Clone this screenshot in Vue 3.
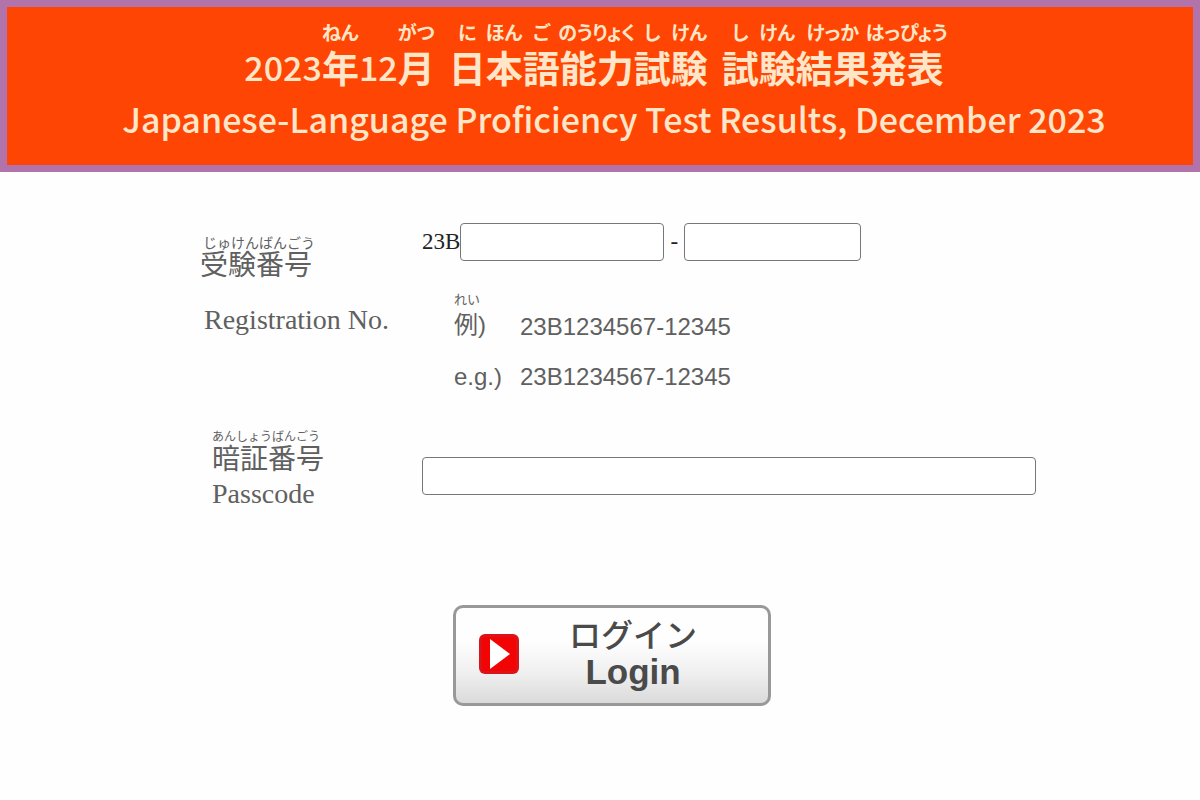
<script setup>
import { ref } from 'vue'

const registration = ref('')
const suffix = ref('')
const passcode = ref('')

const dateParts = [
  { base: '2023', digits: true },
  { base: '年', kana: 'ねん' },
  { base: '12', digits: true },
  { base: '月', kana: 'がつ' },
]
const testParts = [
  { base: '日', kana: 'に' },
  { base: '本', kana: 'ほん' },
  { base: '語', kana: 'ご' },
  { base: '能力', kana: 'のうりょく' },
  { base: '試', kana: 'し' },
  { base: '験', kana: 'けん' },
]
const resultParts = [
  { base: '試', kana: 'し' },
  { base: '験', kana: 'けん' },
  { base: '結果', kana: 'けっか' },
  { base: '発表', kana: 'はっぴょう' },
]
const titleGroups = [dateParts, testParts, resultParts]
</script>

<template>
  <div class="page">
    <header class="banner">
      <h1 class="title">
        <span v-for="(group, g) in titleGroups" :key="g" class="group">
          <span v-for="(part, p) in group" :key="p" class="part">
            <span class="kana">{{ part.kana }}</span>
            <span :class="{ digits: part.digits }">{{ part.base }}</span>
          </span>
        </span>
      </h1>
      <p class="subtitle">Japanese-Language Proficiency Test Results, December 2023</p>
    </header>

    <form class="form" @submit.prevent>
      <div class="row">
        <label class="label" for="registration">
          <span class="reading indent">じゅけんばんごう</span>
          <span class="kanji">受験番号</span>
          <span class="english spaced">Registration No.</span>
        </label>
        <div class="field">
          <div class="number">
            <span>23B</span>
            <input id="registration" v-model="registration" class="box first" type="text" />
            <span class="dash">-</span>
            <input v-model="suffix" class="box second" type="text" aria-label="Registration No." />
          </div>
          <div class="example">
            <span class="mark"><span class="mark-kana">れい</span><span class="mark-kanji">例)</span></span>
            <span>23B1234567-12345</span>
          </div>
          <div class="example latin">
            <span class="mark">e.g.)</span>
            <span>23B1234567-12345</span>
          </div>
        </div>
      </div>

      <div class="row passcode">
        <label class="label inset" for="passcode">
          <span class="reading small">あんしょうばんごう</span>
          <span class="kanji">暗証番号</span>
          <span class="english">Passcode</span>
        </label>
        <div class="field">
          <input id="passcode" v-model="passcode" class="box wide" type="password" />
        </div>
      </div>

      <button class="login" type="submit">
        <svg class="arrow" viewBox="0 0 42 42" aria-hidden="true">
          <rect x="1" y="1" width="40" height="40" rx="6" fill="#d9141a" />
          <rect x="4" y="4" width="34" height="34" rx="3" fill="#f20404" />
          <path d="M12 6 L32 21 L12 36 Z" fill="#fff" />
        </svg>
        <span class="caption">
          <span class="login-ja">ログイン</span>
          <span class="login-en">Login</span>
        </span>
      </button>
    </form>
  </div>
</template>

<style>
body {
  margin: 0;
  background: #fefefe;
}
</style>

<style scoped>
.page {
  color: #606060;
  font-family: "Liberation Sans", "Noto Sans CJK JP", sans-serif;
}
.banner {
  box-sizing: border-box;
  border: 7px solid #b272aa;
  background: #ff4503;
  color: #ffe6c8;
  padding: 15px 0 22px;
  text-align: center;
}
.title {
  display: flex;
  justify-content: center;
  gap: 14px;
  margin: 0;
  padding-right: 12px;
  font: 700 37px/42px "Liberation Sans", "Noto Sans CJK JP", sans-serif;
}
.group {
  display: flex;
}
.part {
  display: flex;
  flex-direction: column;
  align-items: center;
}
.digits {
  font-family: "Noto Sans CJK JP", sans-serif;
  font-size: 34px;
  font-weight: 500;
  line-height: 34px;
}
.kana {
  height: 28px;
  margin: 0 -12px;
  font-size: 19px;
  line-height: 24px;
  font-feature-settings: "palt";
  white-space: nowrap;
}
.subtitle {
  margin: 3px 0 0;
  padding-left: 28px;
  font: 500 34px/48px "Noto Sans CJK JP", sans-serif;
}
.form {
  display: flex;
  flex-direction: column;
  padding: 51px 164px 40px 200px;
}
.row {
  display: grid;
  grid-template-columns: 222px minmax(0, 1fr);
}
.label {
  display: flex;
  flex-direction: column;
  padding-top: 11px;
}
.inset {
  padding: 0 0 0 12px;
}
.reading {
  font-size: 14px;
  line-height: 18px;
}
.indent {
  padding-left: 3px;
}
.small {
  font-size: 12px;
}
.kanji {
  font-size: 28px;
  line-height: 28px;
}
.english {
  margin-top: 6px;
  font: 400 28px/28px "Liberation Serif", serif;
}
.spaced {
  margin: 26px 0 0 4px;
}
.number {
  display: flex;
  align-items: center;
  color: #222;
  font: 400 23px/28px "Liberation Serif", serif;
}
.box {
  box-sizing: border-box;
  min-width: 0;
  height: 38px;
  border: 1px solid #777;
  border-radius: 4px;
  background: #fff;
  padding: 0 8px;
  font: 400 20px/24px "Liberation Sans", sans-serif;
}
.first {
  width: 204px;
}
.dash {
  width: 20px;
  text-align: center;
}
.second {
  width: 177px;
}
.wide {
  width: 100%;
  margin-top: 29px;
}
.example {
  display: flex;
  align-items: flex-end;
  margin-top: 30px;
  padding-left: 32px;
  font-size: 24px;
  line-height: 28px;
}
.latin {
  margin-top: 22px;
}
.mark {
  display: flex;
  flex-direction: column;
  width: 66px;
}
.mark-kana {
  font-size: 13px;
  line-height: 18px;
}
.mark-kanji {
  line-height: 32px;
}
.passcode {
  margin-top: 37px;
}
.login {
  display: flex;
  align-items: center;
  align-self: center;
  box-sizing: border-box;
  width: 318px;
  height: 101px;
  margin: 97px 12px 0 0;
  border: 3px solid #999;
  border-radius: 10px;
  background: linear-gradient(#fefefe 35%, #f0f0f0 68%, #dadada);
  padding: 0 22px 4px;
  color: #4a4a4a;
  cursor: pointer;
}
.arrow {
  width: 42px;
  height: 42px;
}
.caption {
  display: flex;
  flex: 1;
  flex-direction: column;
  align-items: center;
}
.login-ja {
  font: 500 32px/36px "Liberation Sans", "Noto Sans CJK JP", sans-serif;
}
.login-en {
  font: 700 35px/36px "Liberation Sans", sans-serif;
}
</style>
